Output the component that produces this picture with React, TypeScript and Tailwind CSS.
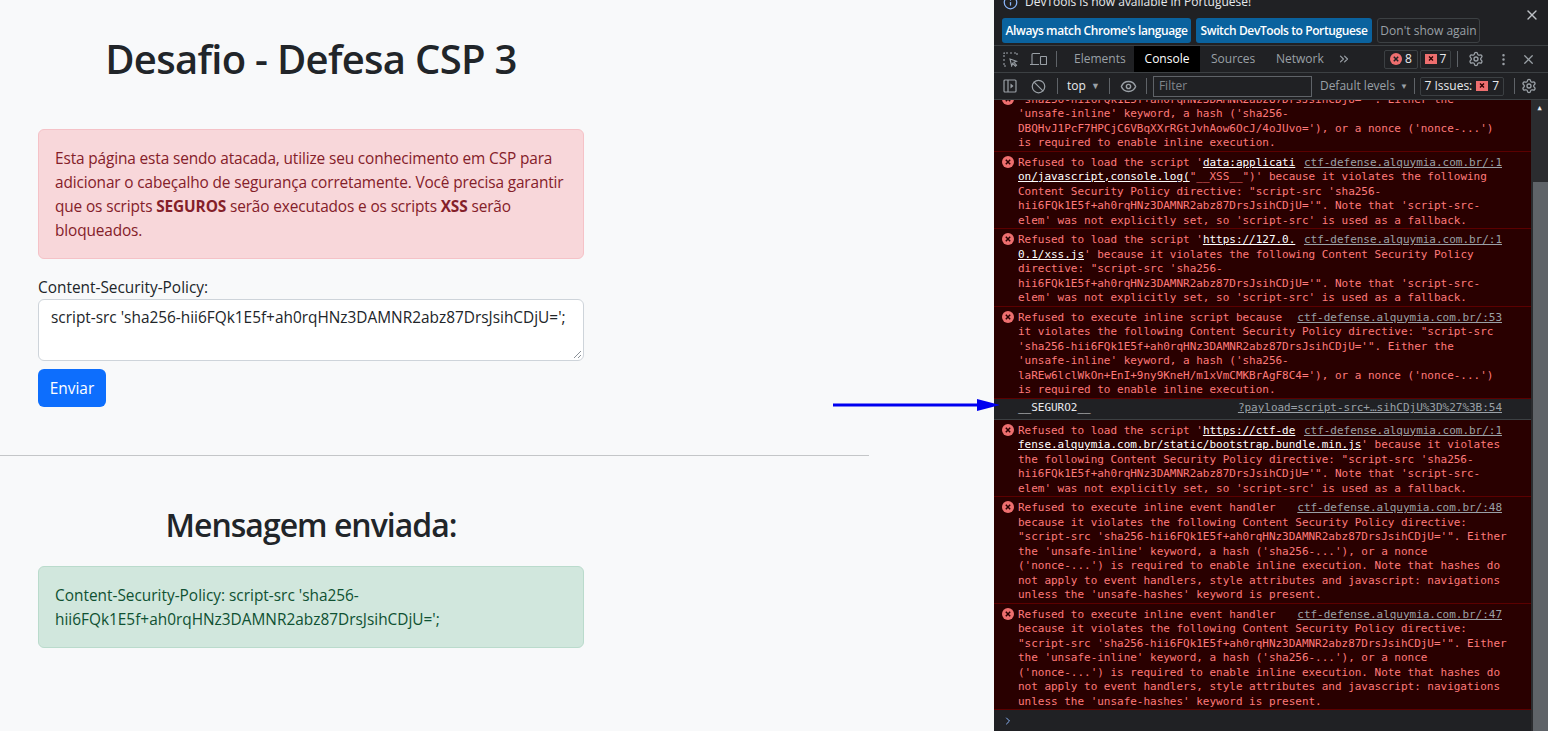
import React from 'react';
import { X, Settings, MoreVertical, ChevronsRight, Eye, Ban, ChevronRight, Info } from 'lucide-react';

const ErrorIcon = () => (
  <svg width="12" height="12" viewBox="0 0 12 12" className="absolute left-[8px] top-[4px]">
    <circle cx="6" cy="6" r="6" fill="#ee6f6f" />
    <path d="M3.8 3.8l4.4 4.4M8.2 3.8l-4.4 4.4" stroke="#290000" strokeWidth="1.5" />
  </svg>
);

const WarnIcon = () => (
  <svg width="12" height="11" viewBox="0 0 12 11">
    <rect width="12" height="10" fill="#ee6f6f" />
    <path d="M4 2.5l4 4M8 2.5l-4 4" stroke="#290000" strokeWidth="1.3" />
  </svg>
);

const Link = ({ children }: { children: React.ReactNode }) => (
  <span className="text-white underline">{children}</span>
);

const Source = ({ children }: { children: React.ReactNode }) => (
  <span className="text-[#9aa0a6] underline">{children}</span>
);

const ErrorRow = ({ first, source, lines }: { first: React.ReactNode; source: string; lines: React.ReactNode[] }) => (
  <div className="relative shrink-0 border-b border-[#5c0000] bg-[#290000] pt-[4px] pl-[24px] pr-[46px] text-[#ff7a7a]">
    <ErrorIcon />
    <div className="flex justify-between whitespace-pre">
      <span>{first}</span>
      <Source>{source}</Source>
    </div>
    {lines.map((line, i) => (
      <div key={i} className="whitespace-pre">{line}</div>
    ))}
  </div>
);

const HASH = 'hii6FQk1E5f+ah0rqHNz3DAMNR2abz87DrsJsihCDjU=';

const Devtools = () => (
  <div className="flex h-[731px] w-[554px] shrink-0 flex-col bg-[#202124] font-['Open_Sans',sans-serif] text-[12px] text-[#bdc1c6]">
    {/* Language infobar */}
    <div className="relative h-[46px] shrink-0 overflow-hidden border-b border-[#3c4043] bg-[#202124]">
      <div className="-mt-[7px] flex h-[18px] items-center pl-[9px]">
        <Info size={15} className="text-[#8ab4f8]" />
        <span className="ml-[7px] text-[#e8eaed]">DevTools is now available in Portuguese!</span>
      </div>
      <div className="mt-[7px] flex gap-[5px] pl-[8px]">
        <div className="flex h-[25px] w-[189px] items-center justify-center rounded-[3px] bg-[#0a629e] font-semibold tracking-[-0.4px] text-white">Always match Chrome's language</div>
        <div className="flex h-[25px] w-[176px] items-center justify-center rounded-[3px] bg-[#0a629e] font-semibold tracking-[-0.4px] text-white">Switch DevTools to Portuguese</div>
        <div className="flex h-[25px] w-[103px] items-center justify-center rounded-[3px] border border-[#3c4043] text-[#9aa0a6]">Don't show again</div>
      </div>
      <X size={16} className="absolute right-[8px] top-[7px] text-[#bdc1c6]" />
    </div>
    {/* Tabs */}
    <div className="flex h-[27px] shrink-0 items-center border-b border-[#3c4043] text-[#9aa0a6]">
      <svg width="15" height="15" viewBox="0 0 15 15" className="ml-[9px]" fill="none" stroke="currentColor" strokeWidth="1.1">
        <path d="M1 5V1h4M7 1h2M11 1h3v3M1 7v2M1 11v3h3" strokeDasharray="2 1" />
        <path d="M7 7l6.5 2.2-2.6 1.1 2.6 2.9-1.1 1-2.7-2.9-1 2.6z" />
      </svg>
      <svg width="17" height="15" viewBox="0 0 17 15" className="ml-[12px]" fill="none" stroke="currentColor" strokeWidth="1.1">
        <path d="M10 1.5H3a1 1 0 0 0-1 1v9.5M0 12.5h9" />
        <rect x="10.5" y="4.5" width="6" height="8" rx="0.5" />
      </svg>
      <div className="ml-[9px] h-[16px] w-px bg-[#5f6368]" />
      <span className="ml-[17px] w-[60px]">Elements</span>
      <span className="flex h-full w-[66px] items-center justify-center bg-black text-white">Console</span>
      <span className="ml-[11px] w-[65px]">Sources</span>
      <span className="w-[61px]">Network</span>
      <ChevronsRight size={14} />
      <div className="ml-[33px] flex h-[19px] w-[34px] items-center justify-center gap-[3px] rounded-[2px] border border-[#3c4043] text-[#e8eaed]">
        <svg width="12" height="12" viewBox="0 0 12 12"><circle cx="6" cy="6" r="6" fill="#ee6f6f" /><path d="M3.8 3.8l4.4 4.4M8.2 3.8l-4.4 4.4" stroke="#202124" strokeWidth="1.5" /></svg>
        8
      </div>
      <div className="ml-[2px] flex h-[19px] w-[31px] items-center justify-center gap-[3px] rounded-[2px] border border-[#3c4043] text-[#e8eaed]"><WarnIcon />7</div>
      <div className="ml-[6px] h-[16px] w-px bg-[#5f6368]" />
      <Settings size={16} className="ml-[10px]" />
      <MoreVertical size={15} className="ml-[12px]" />
      <X size={15} className="ml-[10px]" />
    </div>
    {/* Console toolbar */}
    <div className="flex h-[27px] shrink-0 items-center border-b border-[#3c4043] text-[#9aa0a6]">
      <svg width="14" height="14" viewBox="0 0 14 14" className="ml-[9px]" fill="none" stroke="currentColor" strokeWidth="1.2"><rect x="1" y="1" width="12" height="12" rx="1" /><path d="M5 1v12" /><path d="M7.5 4.5l3 2.5-3 2.5z" fill="currentColor" stroke="none" /></svg>
      <Ban size={15} className="ml-[14px]" />
      <div className="ml-[11px] h-[16px] w-px bg-[#5f6368]" />
      <span className="ml-[9px] w-[24px] text-[#e8eaed]">top</span>
      <span className="text-[9px]">▼</span>
      <div className="ml-[9px] h-[16px] w-px bg-[#5f6368]" />
      <Eye size={17} className="ml-[10px]" />
      <div className="ml-[9px] h-[16px] w-px bg-[#5f6368]" />
      <div className="ml-[6px] flex h-[21px] w-[159px] items-center border border-[#5f6368] bg-[#202124] pl-[5px] text-[#80868b]">Filter</div>
      <span className="ml-[8px] w-[80px] whitespace-nowrap">Default levels</span>
      <span className="text-[8px]">▼</span>
      <div className="ml-[6px] h-[16px] w-px bg-[#5f6368]" />
      <div className="ml-[5px] flex h-[19px] w-[84px] items-center justify-center gap-[4px] rounded-[2px] border border-[#3c4043] text-[#e8eaed]">7 Issues: <WarnIcon />7</div>
      <div className="ml-[10px] h-[16px] w-px bg-[#5f6368]" />
      <Settings size={16} className="ml-[6px]" />
    </div>
    {/* Messages */}
    <div className="relative flex min-h-0 flex-1 flex-col justify-end overflow-hidden font-['DejaVu_Sans_Mono',monospace] text-[11px] leading-[14.5px] tracking-[-0.02px]">
      <ErrorRow
        first="'sha256-hii6FQk1E5f+ah0rqHNz3DAMNR2abz87DrsJsihCDjU='&quot;. Either the"
        source=""
        lines={[
          "'unsafe-inline' keyword, a hash ('sha256-",
          "DBQHvJ1PcF7HPCjC6VBqXXrRGtJvhAow6OcJ/4oJUvo='), or a nonce ('nonce-...')",
          'is required to enable inline execution.',
        ]}
      />
      <ErrorRow
        first={<>Refused to load the script '<Link>data:applicati</Link></>}
        source="ctf-defense.alquymia.com.br/:1"
        lines={[
          <><Link>on/javascript,console.log(</Link>"__XSS__")' because it violates the following</>,
          'Content Security Policy directive: "script-src \'sha256-',
          `${HASH}'". Note that 'script-src-`,
          "elem' was not explicitly set, so 'script-src' is used as a fallback.",
        ]}
      />
      <ErrorRow
        first={<>Refused to load the script '<Link>https://127.0.</Link></>}
        source="ctf-defense.alquymia.com.br/:1"
        lines={[
          <><Link>0.1/xss.js</Link>' because it violates the following Content Security Policy</>,
          'directive: "script-src \'sha256-',
          `${HASH}'". Note that 'script-src-`,
          "elem' was not explicitly set, so 'script-src' is used as a fallback.",
        ]}
      />
      <ErrorRow
        first="Refused to execute inline script because"
        source="ctf-defense.alquymia.com.br/:53"
        lines={[
          'it violates the following Content Security Policy directive: "script-src',
          `'sha256-${HASH}'". Either the`,
          "'unsafe-inline' keyword, a hash ('sha256-",
          "laREw6lclWkOn+EnI+9ny9KneH/m1xVmCMKBrAgF8C4='), or a nonce ('nonce-...')",
          'is required to enable inline execution.',
        ]}
      />
      <div className="flex h-[21px] shrink-0 items-center justify-between border-b border-[#3c4043] bg-[#202124] pl-[24px] pr-[46px] text-[#e8eaed]">
        <span>__SEGURO2__</span>
        <Source>?payload=script-src+…sihCDjU%3D%27%3B:54</Source>
      </div>
      <ErrorRow
        first={<>Refused to load the script '<Link>https://ctf-de</Link></>}
        source="ctf-defense.alquymia.com.br/:1"
        lines={[
          <><Link>fense.alquymia.com.br/static/bootstrap.bundle.min.js</Link>' because it violates</>,
          'the following Content Security Policy directive: "script-src \'sha256-',
          `${HASH}'". Note that 'script-src-`,
          "elem' was not explicitly set, so 'script-src' is used as a fallback.",
        ]}
      />
      <ErrorRow
        first="Refused to execute inline event handler"
        source="ctf-defense.alquymia.com.br/:48"
        lines={[
          'because it violates the following Content Security Policy directive:',
          `"script-src 'sha256-${HASH}'". Either`,
          "the 'unsafe-inline' keyword, a hash ('sha256-...'), or a nonce",
          "('nonce-...') is required to enable inline execution. Note that hashes do",
          'not apply to event handlers, style attributes and javascript: navigations',
          "unless the 'unsafe-hashes' keyword is present.",
        ]}
      />
      <ErrorRow
        first="Refused to execute inline event handler"
        source="ctf-defense.alquymia.com.br/:47"
        lines={[
          'because it violates the following Content Security Policy directive:',
          `"script-src 'sha256-${HASH}'". Either`,
          "the 'unsafe-inline' keyword, a hash ('sha256-...'), or a nonce",
          "('nonce-...') is required to enable inline execution. Note that hashes do",
          'not apply to event handlers, style attributes and javascript: navigations',
          "unless the 'unsafe-hashes' keyword is present.",
        ]}
      />
      <div className="flex h-[21px] shrink-0 items-center pl-[8px]">
        <ChevronRight size={12} className="text-[#8ab4f8]" />
      </div>
      {/* Scrollbar */}
      <div className="absolute bottom-0 right-0 top-0 w-[17px] bg-[#2b2c2f]">
        <div className="mt-[4px] text-center text-[7px] leading-[8px] text-[#e8eaed]">▲</div>
        <div className="absolute bottom-0 left-[2px] right-0 top-[82px] bg-[#5f6368]" />
      </div>
    </div>
  </div>
);

export default function App() {
  return (
    <div className="relative flex h-[731px] w-[1548px] overflow-hidden bg-[#f8f9fa] font-['Open_Sans',sans-serif] text-[#212529]">
      <div className="w-[994px] shrink-0">
        <div className="w-[869px]">
          <div className="ml-[38px] w-[546px]">
            <h1 className="mt-[35px] text-center text-[40px] font-semibold leading-[48px] tracking-[-0.7px]">Desafio - Defesa CSP 3</h1>
            <div className="mt-[46px] rounded-[6px] border border-[#f5c2c7] bg-[#f8d7da] px-[16px] pb-[15px] pt-[17px] text-[15.4px] leading-[24px] tracking-[-0.13px] text-[#842029]">
              Esta página esta sendo atacada, utilize seu conhecimento em CSP para adicionar o cabeçalho de segurança corretamente. Você precisa garantir que os scripts <b>SEGUROS</b> serão executados e os scripts <b>XSS</b> serão bloqueados.
            </div>
            <div className="mt-[17px] h-[23px] text-[15.4px] leading-[24px]">Content-Security-Policy:</div>
            <div className="relative h-[62px] rounded-[6px] border border-[#ced4da] bg-white px-[12px] py-[6px] text-[15.4px] leading-[24px]">
              <span className="whitespace-nowrap">script-src 'sha256-hii6FQk1E5f+ah0rqHNz3DAMNR2abz87DrsJsihCDjU=';</span>
              <svg width="9" height="9" viewBox="0 0 9 9" className="absolute bottom-[1px] right-[1px]" stroke="#6c757d" strokeWidth="0.8"><path d="M1 8l7-7M5 8l3-3" /></svg>
            </div>
            <button className="mt-[8px] h-[38px] w-[68px] rounded-[6px] bg-[#0d6efd] pt-px text-[15.4px] text-white">Enviar</button>
          </div>
          <div className="mt-[48px] h-px bg-[#c4c6c8]" />
          <div className="ml-[38px] w-[546px]">
            <h2 className="mt-[50px] text-center text-[32px] font-semibold leading-[38px] tracking-[-1px]">Mensagem enviada:</h2>
            <div className="mt-[22px] rounded-[6px] border border-[#badbcc] bg-[#d1e7dd] px-[16px] pb-[15px] pt-[17px] text-[15.4px] leading-[24px] text-[#0f5132]">
              Content-Security-Policy: script-src 'sha256-<br />hii6FQk1E5f+ah0rqHNz3DAMNR2abz87DrsJsihCDjU=';
            </div>
          </div>
        </div>
      </div>
      <Devtools />
      {/* Annotation arrow */}
      <svg width="170" height="14" viewBox="0 0 170 14" className="absolute left-[833px] top-[398px]">
        <path d="M0 7h146" stroke="#0000f0" strokeWidth="3" />
        <path d="M167 7l-23-6v12z" fill="#0000f0" />
      </svg>
    </div>
  );
}
